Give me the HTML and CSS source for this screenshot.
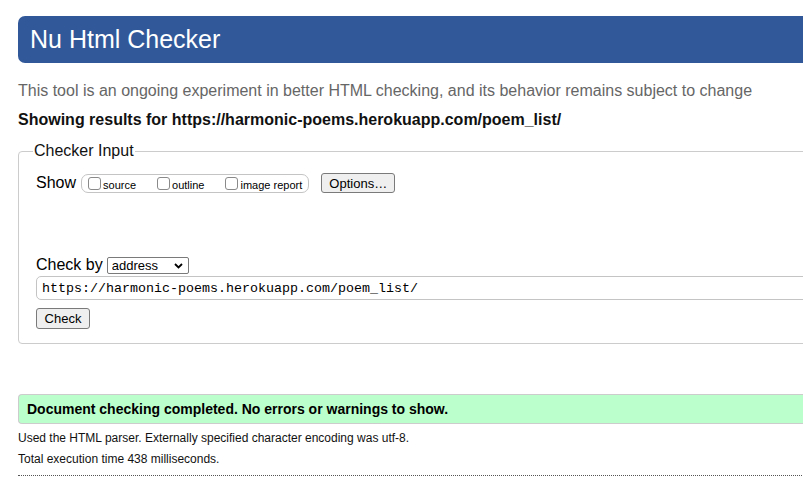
FILE: index.html
```html
<!DOCTYPE html>
<html lang="en">
<head>
<meta charset="utf-8">
<title>Nu Html Checker</title>
<link rel="stylesheet" href="styles.css">
</head>
<body>
<div class="page">
  <h1 class="title">Nu Html Checker</h1>
  <p class="about">This tool is an ongoing experiment in better HTML checking, and its behavior remains subject to change</p>
  <p class="showing">Showing results for https://harmonic-poems.herokuapp.com/poem_list/</p>
  <form class="form">
    <fieldset class="checker">
      <legend class="legend">Checker Input</legend>
      <div class="show-row">
        <span class="show-label">Show</span>
        <span class="group">
          <label class="opt"><input type="checkbox" class="cb"><span>source</span></label>
          <label class="opt"><input type="checkbox" class="cb"><span>outline</span></label>
          <label class="opt"><input type="checkbox" class="cb"><span>image report</span></label>
        </span>
        <button type="button" class="btn btn-options">Options…</button>
      </div>
      <div class="checkby-row">
        <span class="checkby-label">Check by</span>
        <span class="select-wrap">
          <select class="select"><option>address</option></select>
          <svg class="chev" width="9" height="6" viewBox="0 0 9 6"><path d="M1 1 L4.5 4.5 L8 1" fill="none" stroke="#000" stroke-width="1.8"/></svg>
        </span>
      </div>
      <input class="url" type="text" value="https://harmonic-poems.herokuapp.com/poem_list/">
      <div class="submit-row"><button type="button" class="btn btn-check">Check</button></div>
    </fieldset>
  </form>
  <p class="success">Document checking completed. No errors or warnings to show.</p>
  <p class="details first">Used the HTML parser. Externally specified character encoding was utf-8.</p>
  <p class="details">Total execution time 438 milliseconds.</p>
  <hr class="rule">
</div>
</body>
</html>
```
FILE: styles.css
```css
html, body {
  margin: 0;
  padding: 0;
  background: #fff;
  overflow: hidden;
}
body {
  font-family: "Liberation Sans", Arial, Helvetica, sans-serif;
  color: #000;
}
.page {
  width: 900px;
  padding-left: 18px;
}
.title {
  margin: 16px 0 0;
  height: 47px;
  line-height: 47px;
  padding: 0 12px;
  background: #31599a;
  color: #fff;
  font-size: 25px;
  font-weight: normal;
  border-radius: 7px 0 0 7px;
}
.about {
  margin: 19px 0 0;
  font-size: 16px;
  line-height: 18px;
  color: #666;
}
.showing {
  margin: 11px 0 0;
  font-size: 16px;
  line-height: 18px;
  font-weight: bold;
  color: #111;
}
.form { margin: 0; }
.checker {
  margin: 13px 0 0;
  padding: 13px 17px 14px;
  border: 1px solid #ccc;
  border-radius: 4px;
  min-width: 0;
}
.legend {
  padding: 0 1px;
  margin-left: -3px;
  font-size: 16px;
  line-height: 18px;
  color: #111;
}
.show-row {
  display: flex;
  align-items: center;
  height: 20px;
}
.show-label {
  font-size: 16px;
  line-height: 18px;
  margin-right: 5px;
}
.group {
  display: flex;
  align-items: baseline;
  box-sizing: border-box;
  height: 19px;
  padding: 0 6px 0 6px;
  border: 1px solid #c4c4c4;
  border-radius: 7px;
  gap: 21px;
}
.opt {
  display: flex;
  align-items: baseline;
  gap: 2px;
  font-size: 11px;
  line-height: 15px;
  padding-top: 1px;
}
.cb {
  appearance: none;
  -webkit-appearance: none;
  width: 13px;
  height: 13px;
  margin: 0;
  border: 1px solid #8a8a8a;
  border-radius: 3px;
  background: #fff;
  box-sizing: border-box;
  position: relative;
  top: 1px;
}
.btn {
  font-family: "Liberation Sans", Arial, sans-serif;
  font-size: 13px;
  color: #000;
  background: #efefef;
  border: 1px solid #7a7a7a;
  border-radius: 3px;
  padding: 0 6px;
  margin: 0;
}
.btn-options {
  margin-left: 12px;
  height: 20px;
  width: 74px;
}
.checkby-row {
  display: flex;
  align-items: center;
  margin-top: 63px;
  height: 18px;
}
.checkby-label {
  font-size: 16px;
  line-height: 18px;
  margin-right: 4px;
}
.select-wrap {
  position: relative;
  display: inline-block;
}
.select {
  appearance: none;
  -webkit-appearance: none;
  display: block;
  box-sizing: border-box;
  width: 82px;
  height: 17px;
  margin: 0;
  padding: 0 0 0 4px;
  font-family: "Liberation Sans", Arial, sans-serif;
  font-size: 13px;
  line-height: 15px;
  color: #000;
  background: #fff;
  border: 1px solid #7a7a7a;
  border-radius: 2px;
}
.chev {
  position: absolute;
  right: 6px;
  top: 6px;
}
.url {
  display: block;
  box-sizing: border-box;
  width: 100%;
  height: 24px;
  margin: 2px 0 0;
  padding: 0 5px;
  font-family: "Liberation Mono", "DejaVu Sans Mono", monospace;
  font-size: 13.33px;
  color: #000;
  border: 1px solid #c4c4c4;
  border-radius: 5px;
  background: #fff;
}
.submit-row {
  margin-top: 8px;
  display: flex;
}
.btn-check {
  height: 21px;
  width: 54px;
}
.success {
  margin: 50px 0 0;
  padding: 6px 8px;
  font-size: 14px;
  line-height: 16px;
  font-weight: bold;
  background: #bfc;
  border: 1px solid #ccc;
  border-right: none;
  border-radius: 4px 0 0 4px;
  color: #000;
}
.details {
  margin: 7px 0 0;
  font-size: 12px;
  line-height: 14px;
  color: #111;
}
.details.first { margin-top: 7px; }
.rule {
  margin: 9px 0 0;
  border: none;
  border-top: 1px dotted #555;
  height: 0;
}
```
